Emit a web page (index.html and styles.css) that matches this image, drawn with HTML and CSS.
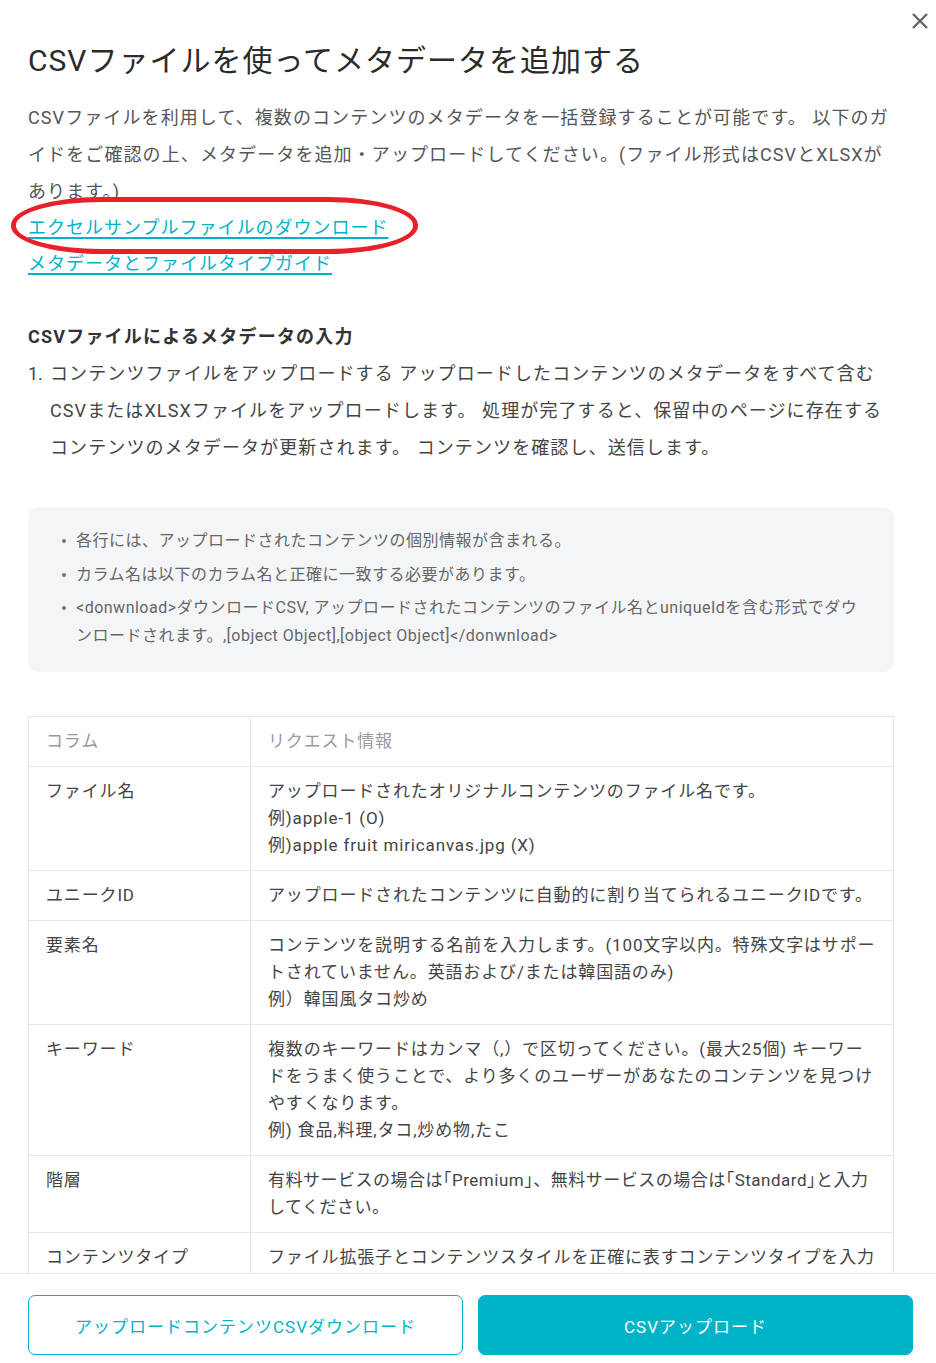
FILE: index.html
```html
<!DOCTYPE html>
<html lang="ja">
<head>
<meta charset="utf-8">
<title>CSVファイルを使ってメタデータを追加する</title>
<link rel="stylesheet" href="styles.css">
</head>
<body>
<div class="modal">
  <button class="close" aria-label="閉じる">
    <svg width="18" height="18" viewBox="0 0 18 18"><path d="M2 2 L16 16 M16 2 L2 16" stroke="#666" stroke-width="2.4" stroke-linecap="butt"/></svg>
  </button>
  <div class="content">
    <h1 class="title">CSVファイルを使ってメタデータを追加する</h1>
    <p class="intro">CSVファイルを利用して、複数のコンテンツのメタデータを一括登録することが可能です。 以下のガイドをご確認の上、メタデータを追加・アップロードしてください。(ファイル形式はCSVとXLSXがあります。)</p>
    <div class="links">
      <a href="#" class="link marked">エクセルサンプルファイルのダウンロード</a>
      <a href="#" class="link">メタデータとファイルタイプガイド</a>
    </div>
    <h2 class="subtitle">CSVファイルによるメタデータの入力</h2>
    <ol class="steps">
      <li><span class="num">1.</span><span class="step-text">コンテンツファイルをアップロードする アップロードしたコンテンツのメタデータをすべて含むCSVまたはXLSXファイルをアップロードします。 処理が完了すると、保留中のページに存在するコンテンツのメタデータが更新されます。 コンテンツを確認し、送信します。</span></li>
    </ol>
    <div class="notice">
      <ul class="notice-list">
        <li>各行には、アップロードされたコンテンツの個別情報が含まれる。</li>
        <li>カラム名は以下のカラム名と正確に一致する必要があります。</li>
        <li>&lt;donwnload&gt;ダウンロードCSV, アップロードされたコンテンツのファイル名とuniqueIdを含む形式でダウンロードされます。,[object Object],[object Object]&lt;/donwnload&gt;</li>
      </ul>
    </div>
    <table class="spec">
      <thead>
        <tr><th class="col1">コラム</th><th>リクエスト情報</th></tr>
      </thead>
      <tbody>
        <tr><td class="col1">ファイル名</td><td>アップロードされたオリジナルコンテンツのファイル名です。<br>例)apple-1 (O)<br>例)apple fruit miricanvas.jpg (X)</td></tr>
        <tr><td class="col1">ユニークID</td><td>アップロードされたコンテンツに自動的に割り当てられるユニークIDです。</td></tr>
        <tr><td class="col1">要素名</td><td>コンテンツを説明する名前を入力します。(100文字以内。特殊文字はサポートされていません。英語および/または韓国語のみ)<br>例）韓国風タコ炒め</td></tr>
        <tr><td class="col1">キーワード</td><td>複数のキーワードはカンマ（,）で区切ってください。(最大25個) キーワードをうまく使うことで、より多くのユーザーがあなたのコンテンツを見つけやすくなります。<br>例) 食品,料理,タコ,炒め物,たこ</td></tr>
        <tr><td class="col1">階層</td><td class="tier">有料サービスの場合は｢Premium｣、無料サービスの場合は｢Standard｣と入力してください。</td></tr>
        <tr><td class="col1">コンテンツタイプ</td><td>ファイル拡張子とコンテンツスタイルを正確に表すコンテンツタイプを入力してください。<br>例) 写真, イラスト, テンプレート</td></tr>
      </tbody>
    </table>
  </div>
  <div class="footer">
    <button class="btn btn-outline">アップロードコンテンツCSVダウンロード</button>
    <button class="btn btn-fill">CSVアップロード</button>
  </div>
</div>
</body>
</html>
```
FILE: styles.css
```css
* { box-sizing: border-box; }
html, body { margin: 0; padding: 0; background: #fff; }
body {
  font-family: Roboto, "Noto Sans CJK JP", "Noto Sans", sans-serif;
  color: #333;
}
.modal {
  position: relative;
  height: 1363px;
  display: flex;
  flex-direction: column;
  overflow: hidden;
}
.close {
  position: absolute;
  top: 12px;
  right: 7px;
  width: 18px;
  height: 18px;
  padding: 0;
  border: 0;
  background: none;
  cursor: pointer;
}
.close svg { display: block; }
.content {
  flex: 1;
  overflow: hidden;
  padding: 40px 42px 0 28px;
}
.title {
  margin: 0;
  font-size: 30px;
  line-height: 42px;
  font-weight: 400;
  color: #2b2b2b;
  letter-spacing: 1px;
}
.intro {
  margin: 17px 0 0;
  font-size: 18px;
  line-height: 37px;
  color: #555;
  letter-spacing: 1.1px;
}
.links { display: flex; flex-direction: column; align-items: flex-start; }
.link {
  font-size: 18px;
  line-height: 36px;
  color: #00b3c7;
  letter-spacing: 1px;
  text-decoration: underline;
  text-underline-offset: 3px;
  text-decoration-thickness: 1.5px;
}
.marked { position: relative; }
.marked::after {
  content: "";
  position: absolute;
  left: -17px;
  right: -30px;
  top: -13px;
  bottom: -8px;
  border: 5px solid #e8202a;
  border-radius: 90px / 28px;
  pointer-events: none;
}
.subtitle {
  margin: 37px 0 0;
  font-size: 18px;
  line-height: 36px;
  font-weight: 700;
  color: #333;
  letter-spacing: 1.2px;
}
.steps {
  list-style: none;
  margin: 0;
  padding: 0;
  font-size: 18px;
  line-height: 37px;
  color: #444;
  letter-spacing: 1.1px;
}
.steps li { display: flex; }
.num { flex: 0 0 22px; letter-spacing: 0; }
.step-text { flex: 1; padding-right: 6px; }
.notice {
  margin-top: 41px;
  background: #f4f5f7;
  border-radius: 10px;
  padding: 20px 26px 22px 34px;
}
.notice-list {
  list-style: none;
  margin: 0;
  padding: 0;
  font-size: 16px;
  line-height: 28px;
  color: #666;
  letter-spacing: 0.5px;
}
.notice-list li {
  display: flex;
  margin-bottom: 5.5px;
}
.notice-list li:last-child { margin-bottom: 0; }
.notice-list li::before {
  content: "";
  flex: 0 0 4px;
  height: 4px;
  margin: 12px 10px 0 0;
  border-radius: 50%;
  background: #777;
}
.spec {
  margin-top: 44px;
  width: 100%;
  border-collapse: collapse;
  font-size: 17px;
  line-height: 27px;
  letter-spacing: 0.85px;
}
.spec th, .spec td {
  border: 1px solid #e6e6e6;
  padding: 11px 17px;
  text-align: left;
  vertical-align: top;
  font-weight: 400;
}
.spec th { color: #9a9a9a; }
.spec td { color: #444; }
.spec td.tier { letter-spacing: 0.5px; }
.spec .col1 { width: 222px; color: #444; }
.spec th.col1 { color: #9a9a9a; }
.footer {
  flex: 0 0 90px;
  border-top: 1px solid #e6e6e6;
  background: #fff;
  display: flex;
  gap: 15px;
  padding: 21px 23px 8px 28px;
}
.btn {
  flex: 1;
  height: 60px;
  border-radius: 7px;
  font-family: inherit;
  font-size: 17px;
  letter-spacing: 1px;
  cursor: pointer;
}
.btn-outline {
  background: #fff;
  border: 1px solid #00b3c7;
  color: #00b3c7;
}
.btn-fill {
  background: #00b3c7;
  border: 1px solid #00b3c7;
  color: #fff;
}
```
